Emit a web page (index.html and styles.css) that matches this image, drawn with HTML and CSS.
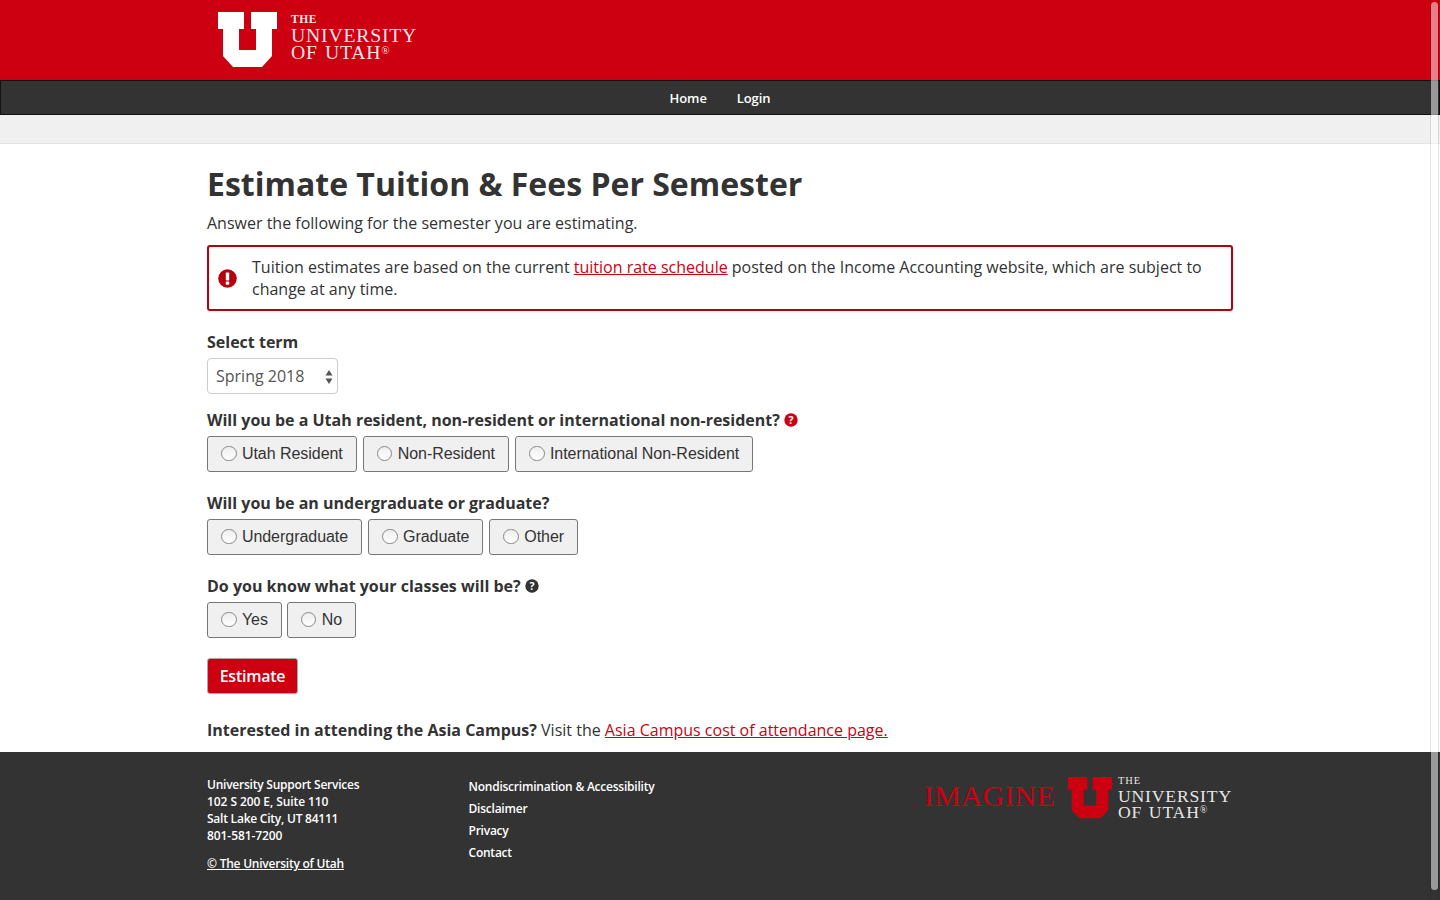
FILE: index.html
```html
<!DOCTYPE html>
<html lang="en">
<head>
<meta charset="utf-8">
<title>Estimate Tuition &amp; Fees Per Semester</title>
<link rel="stylesheet" href="styles.css">
</head>
<body>
<header class="masthead">
  <div class="wrap masthead-inner">
    <a class="logo" href="#">
      <svg class="logo-u" viewBox="0 0 59 56" aria-hidden="true"><path fill="#fff" d="M0 0H26V17H21V38H38V17H33V0H59V17H54V44L44 55H15L5 44V17H0Z"/></svg>
      <span class="wordmark"><span class="wm-the">THE</span><span class="wm-line">UNIVERSITY</span><span class="wm-line">OF UTAH<sup class="wm-reg">®</sup></span></span>
    </a>
  </div>
</header>
<nav class="navbar">
  <a href="#">Home</a>
  <a href="#">Login</a>
</nav>
<div class="subbar"></div>
<main class="wrap content">
  <h1>Estimate Tuition &amp; Fees Per Semester</h1>
  <p class="intro">Answer the following for the semester you are estimating.</p>
  <div class="alert">
    <svg class="alert-icon" viewBox="0 0 20 20" aria-hidden="true"><circle cx="10" cy="10" r="9.8" fill="#b5000f"/><rect x="8.2" y="3.6" width="3.6" height="8.4" rx="0.8" fill="#fff"/><rect x="8.2" y="13.2" width="3.6" height="3.3" rx="0.8" fill="#fff"/></svg>
    <p>Tuition estimates are based on the current <a href="#">tuition rate schedule</a> posted on the Income Accounting website, which are subject to change at any time.</p>
  </div>
  <form>
    <label class="q q-term" for="term">Select term</label>
    <div class="select-box">
      <select id="term"><option>Spring 2018</option></select>
      <svg class="select-arrows" viewBox="0 0 8 14" aria-hidden="true"><path fill="#555" d="M4 0L7.5 5.5H.5ZM4 14L.5 8.5H7.5Z"/></svg>
    </div>
    <div class="q">Will you be a Utah resident, non-resident or international non-resident?
      <svg class="help" viewBox="0 0 14 14" aria-hidden="true"><circle cx="7" cy="7" r="6.7" fill="#cc0011"/><text x="7" y="10.7" text-anchor="middle" class="help-mark">?</text></svg></div>
    <div class="choices">
      <label class="choice"><input type="radio" name="res"><span>Utah Resident</span></label>
      <label class="choice"><input type="radio" name="res"><span>Non-Resident</span></label>
      <label class="choice"><input type="radio" name="res"><span>International Non-Resident</span></label>
    </div>
    <div class="q">Will you be an undergraduate or graduate?</div>
    <div class="choices">
      <label class="choice"><input type="radio" name="lvl"><span>Undergraduate</span></label>
      <label class="choice"><input type="radio" name="lvl"><span>Graduate</span></label>
      <label class="choice"><input type="radio" name="lvl"><span>Other</span></label>
    </div>
    <div class="q">Do you know what your classes will be?
      <svg class="help" viewBox="0 0 14 14" aria-hidden="true"><circle cx="7" cy="7" r="6.7" fill="#333"/><text x="7" y="10.7" text-anchor="middle" class="help-mark">?</text></svg></div>
    <div class="choices tight">
      <label class="choice"><input type="radio" name="cls"><span>Yes</span></label>
      <label class="choice"><input type="radio" name="cls"><span>No</span></label>
    </div>
    <button class="estimate" type="button">Estimate</button>
  </form>
  <p class="asia"><strong>Interested in attending the Asia Campus?</strong> Visit the <a href="#">Asia Campus cost of attendance page.</a></p>
</main>
<footer class="footer">
  <div class="wrap footer-inner">
    <div class="f-address">
      <p>University Support Services<br><span class="f-num">102 S 200 E, Suite 110</span><br>Salt Lake City, UT 84111<br><span class="f-num">801-581-7200</span></p>
      <a class="f-copy" href="#">© The University of Utah</a>
    </div>
    <ul class="f-links">
      <li><a href="#">Nondiscrimination &amp; Accessibility</a></li>
      <li><a href="#">Disclaimer</a></li>
      <li><a href="#">Privacy</a></li>
      <li><a href="#">Contact</a></li>
    </ul>
    <div class="f-logo">
      <span class="imagine">IMAGINE</span>
      <svg class="f-u" viewBox="0 0 59 56" aria-hidden="true"><path fill="#cc0011" d="M0 0H26V17H21V38H38V17H33V0H59V17H54V44L44 55H15L5 44V17H0Z"/></svg>
      <span class="wordmark small"><span class="wm-the">THE</span><span class="wm-line">UNIVERSITY</span><span class="wm-line">OF UTAH<sup class="wm-reg">®</sup></span></span>
    </div>
  </div>
</footer>
<div class="scrollbar" aria-hidden="true"><div class="thumb"></div></div>
</body>
</html>
```
FILE: styles.css
```css
* { box-sizing: border-box; }
html, body { margin: 0; padding: 0; height: 900px; overflow: hidden; }
body { font-family: "Open Sans", sans-serif; font-size: 16px; color: #333; background: #fff; line-height: 22px; }
a { color: #cc0011; }
p { margin: 0; }
.wrap { width: 1026px; margin: 0 auto; }

.masthead { height: 80px; background: #cc0011; }
.masthead-inner { height: 80px; padding: 12px 0 0 11px; }
.logo { display: flex; align-items: flex-start; gap: 14px; color: #fff; text-decoration: none; }
.logo-u { width: 59px; height: 56px; display: block; }
.wordmark { display: flex; flex-direction: column; font-family: "Liberation Serif", serif; color: rgba(255,255,255,0.92); font-size: 19.7px; line-height: 17.5px; letter-spacing: 0.8px; word-spacing: 1.5px; padding-top: 2px; }
.wm-the { font-size: 11.5px; line-height: 11px; font-weight: 700; letter-spacing: 0.6px; margin-bottom: 1.5px; }
.wm-line { display: block; white-space: nowrap; }
.wm-reg { font-size: 11px; line-height: 0; vertical-align: 5px; letter-spacing: 0; }

.navbar { height: 35px; background: #333; border: 1px solid #111; display: flex; justify-content: center; gap: 30px; align-items: center; }
.navbar a { color: #fff; text-decoration: none; font-size: 13px; font-weight: 600; letter-spacing: -0.1px; }
.subbar { height: 29px; background: #f0f0f0; border-bottom: 1px solid #e4e4e4; }

.content { padding-top: 20px; }
h1 { margin: 0; font-size: 32px; line-height: 40px; font-weight: 700; color: #333; }
.intro { margin-top: 8px; }
.alert { margin-top: 11px; height: 66px; border: 2px solid #b5000f; border-radius: 3px; display: flex; align-items: center; padding: 0 20px 0 9px; gap: 15px; }
.alert-icon { width: 19px; height: 19px; flex: none; }
.alert a { color: #cc0011; }

.q { display: block; font-weight: 700; line-height: 22px; margin-bottom: 5px; color: #333; }
.q-term { margin-top: 20px; }
.select-box { position: relative; width: 131px; height: 36px; margin-bottom: 15px; }
.select-box select { appearance: none; width: 100%; height: 36px; border: 1px solid #ccc; border-radius: 4px; background: #fff; font: 16px "Open Sans", sans-serif; color: #555; padding: 0 8px; }
.select-arrows { position: absolute; right: 5px; top: 12px; width: 8px; height: 14px; pointer-events: none; }
.help { width: 14px; height: 14px; vertical-align: -1px; }
.help-mark { font: 700 10.5px "Open Sans", sans-serif; fill: #fff; }

.choices { display: flex; gap: 6px; margin-bottom: 20px; }
.choices.tight { gap: 5px; }
.choice { display: flex; align-items: center; height: 36px; padding: 0 13px; background: #f0f0f0; border: 1px solid #777; border-radius: 3px; font-family: "Liberation Sans", sans-serif; font-size: 16px; letter-spacing: -0.04px; color: #333; gap: 5.4px; }
.choice input { appearance: none; width: 15.5px; height: 15.5px; margin: -1px 0 0; border: 1px solid #888; border-radius: 50%; background: linear-gradient(#eee, #fff); }

.estimate { display: block; width: 91px; height: 36px; background: #cc0011; color: #fff; border: 1px solid #a8a8a8; border-radius: 3px; font: 600 16px "Open Sans", sans-serif; letter-spacing: -0.25px; padding: 0; }
.asia { margin-top: 25px; }
.asia strong { font-weight: 700; }

.footer { position: absolute; left: 0; right: 0; top: 752px; height: 148px; background: #333; color: #fff; font-size: 12px; font-weight: 600; line-height: 17px; letter-spacing: -0.23px; }
.footer-inner { display: flex; padding-top: 24px; position: relative; }
.footer a { color: #fff; }
.f-address { width: 261.5px; }
.f-num { letter-spacing: -0.08px; }
.f-copy { display: block; margin-top: 11px; }
.f-links { list-style: none; margin: 2px 0 0; padding: 0; display: flex; flex-direction: column; gap: 5px; }
.f-links a { text-decoration: none; }
.f-logo { margin-left: auto; display: flex; align-items: flex-start; margin-top: 1px; letter-spacing: 0; padding-right: 1px; }
.imagine { font-family: "Liberation Serif", serif; color: #cc0011; font-size: 30px; line-height: 38px; font-weight: 400; padding-top: 0; letter-spacing: 0.15px; margin-right: 13px; }
.f-u { width: 44px; height: 42px; display: block; margin-right: 6px; }
.wordmark.small { font-size: 17.7px; line-height: 16.5px; letter-spacing: 0.8px; word-spacing: 1.5px; font-weight: 400; padding-top: 0; margin-top: -2px; color: rgba(255,255,255,0.9); }
.wordmark.small .wm-the { font-size: 10.5px; font-weight: 400; letter-spacing: 0.9px; }
.wordmark.small .wm-reg { font-size: 10px; }

.scrollbar { position: fixed; left: 1430px; top: 0; width: 9px; height: 900px; border-left: 1px solid rgba(0,0,0,0.1); border-right: 1px solid rgba(0,0,0,0.1); padding-top: 2px; }
.thumb { width: 7px; height: 888px; border-radius: 4px; background: rgba(255,255,255,0.5); }
```
